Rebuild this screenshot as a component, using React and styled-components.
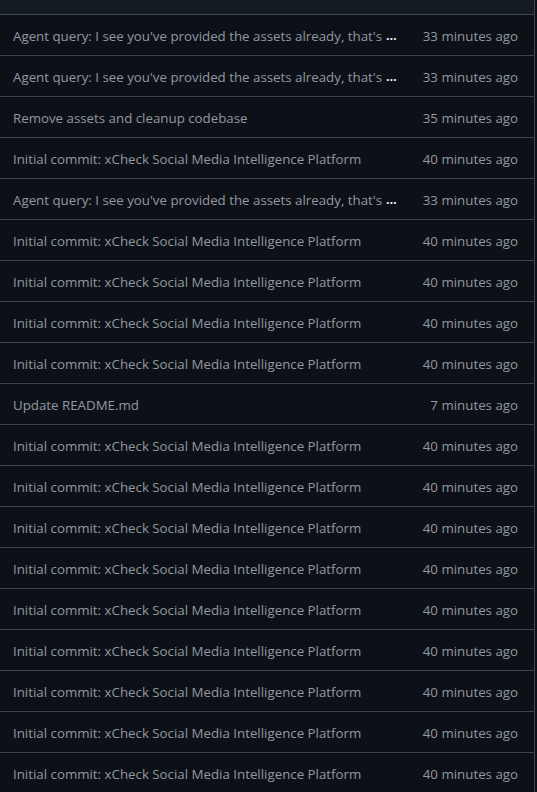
import React from 'react'
import styled, { createGlobalStyle } from 'styled-components'

const AGENT = "Agent query: I see you've provided the assets already, that's"
const INIT = 'Initial commit: xCheck Social Media Intelligence Platform'

const commits = [
  { msg: AGENT, more: true, time: '33 minutes ago' },
  { msg: AGENT, more: true, time: '33 minutes ago' },
  { msg: 'Remove assets and cleanup codebase', time: '35 minutes ago' },
  { msg: INIT, time: '40 minutes ago' },
  { msg: AGENT, more: true, time: '33 minutes ago' },
  { msg: INIT, time: '40 minutes ago' },
  { msg: INIT, time: '40 minutes ago' },
  { msg: INIT, time: '40 minutes ago' },
  { msg: INIT, time: '40 minutes ago' },
  { msg: 'Update README.md', time: '7 minutes ago' },
  { msg: INIT, time: '40 minutes ago' },
  { msg: INIT, time: '40 minutes ago' },
  { msg: INIT, time: '40 minutes ago' },
  { msg: INIT, time: '40 minutes ago' },
  { msg: INIT, time: '40 minutes ago' },
  { msg: INIT, time: '40 minutes ago' },
  { msg: INIT, time: '40 minutes ago' },
  { msg: INIT, time: '40 minutes ago' },
  { msg: INIT, time: '40 minutes ago' },
]

const App = () => {
  return (
    <>
      <GlobalStyle />
      <Table>
        <TableHead />
        {commits.map((c, i) => (
          <Row key={i}>
            <Message>
              <MessageLink>{c.msg}</MessageLink>
              {c.more && <Expander>…</Expander>}
            </Message>
            <Time>{c.time}</Time>
          </Row>
        ))}
      </Table>
    </>
  )
}

export default App

const GlobalStyle = createGlobalStyle`
  body {
    margin: 0;
    background: #0d1117;
    font-family: "Open Sans", "Noto Sans", sans-serif;
    overflow: hidden;
  }
`
const Table = styled.div`
  width: 534px;
  border-right: 1px solid #3d444d;
  background: #0d1117;
`
const TableHead = styled.div`
  height: 14px;
  background: #151b23;
  border-bottom: 1px solid #3d444d;
`
const Row = styled.div`
  display: flex;
  align-items: center;
  justify-content: space-between;
  box-sizing: border-box;
  height: 41px;
  padding: 2px 16px 0 13px;
  border-bottom: 1px solid #3d444d;
`
const Message = styled.div`
  display: flex;
  align-items: center;
  gap: 4px;
  min-width: 0;
`
const MessageLink = styled.span`
  color: #9198a1;
  font-size: 13.3px;
  white-space: nowrap;
`
const Expander = styled.span`
  color: #f0f6fc;
  font-size: 12.5px;
  font-weight: 700;
  line-height: 1;
  letter-spacing: -0.5px;
`
const Time = styled.span`
  color: #9198a1;
  font-size: 13.3px;
  white-space: nowrap;
`
